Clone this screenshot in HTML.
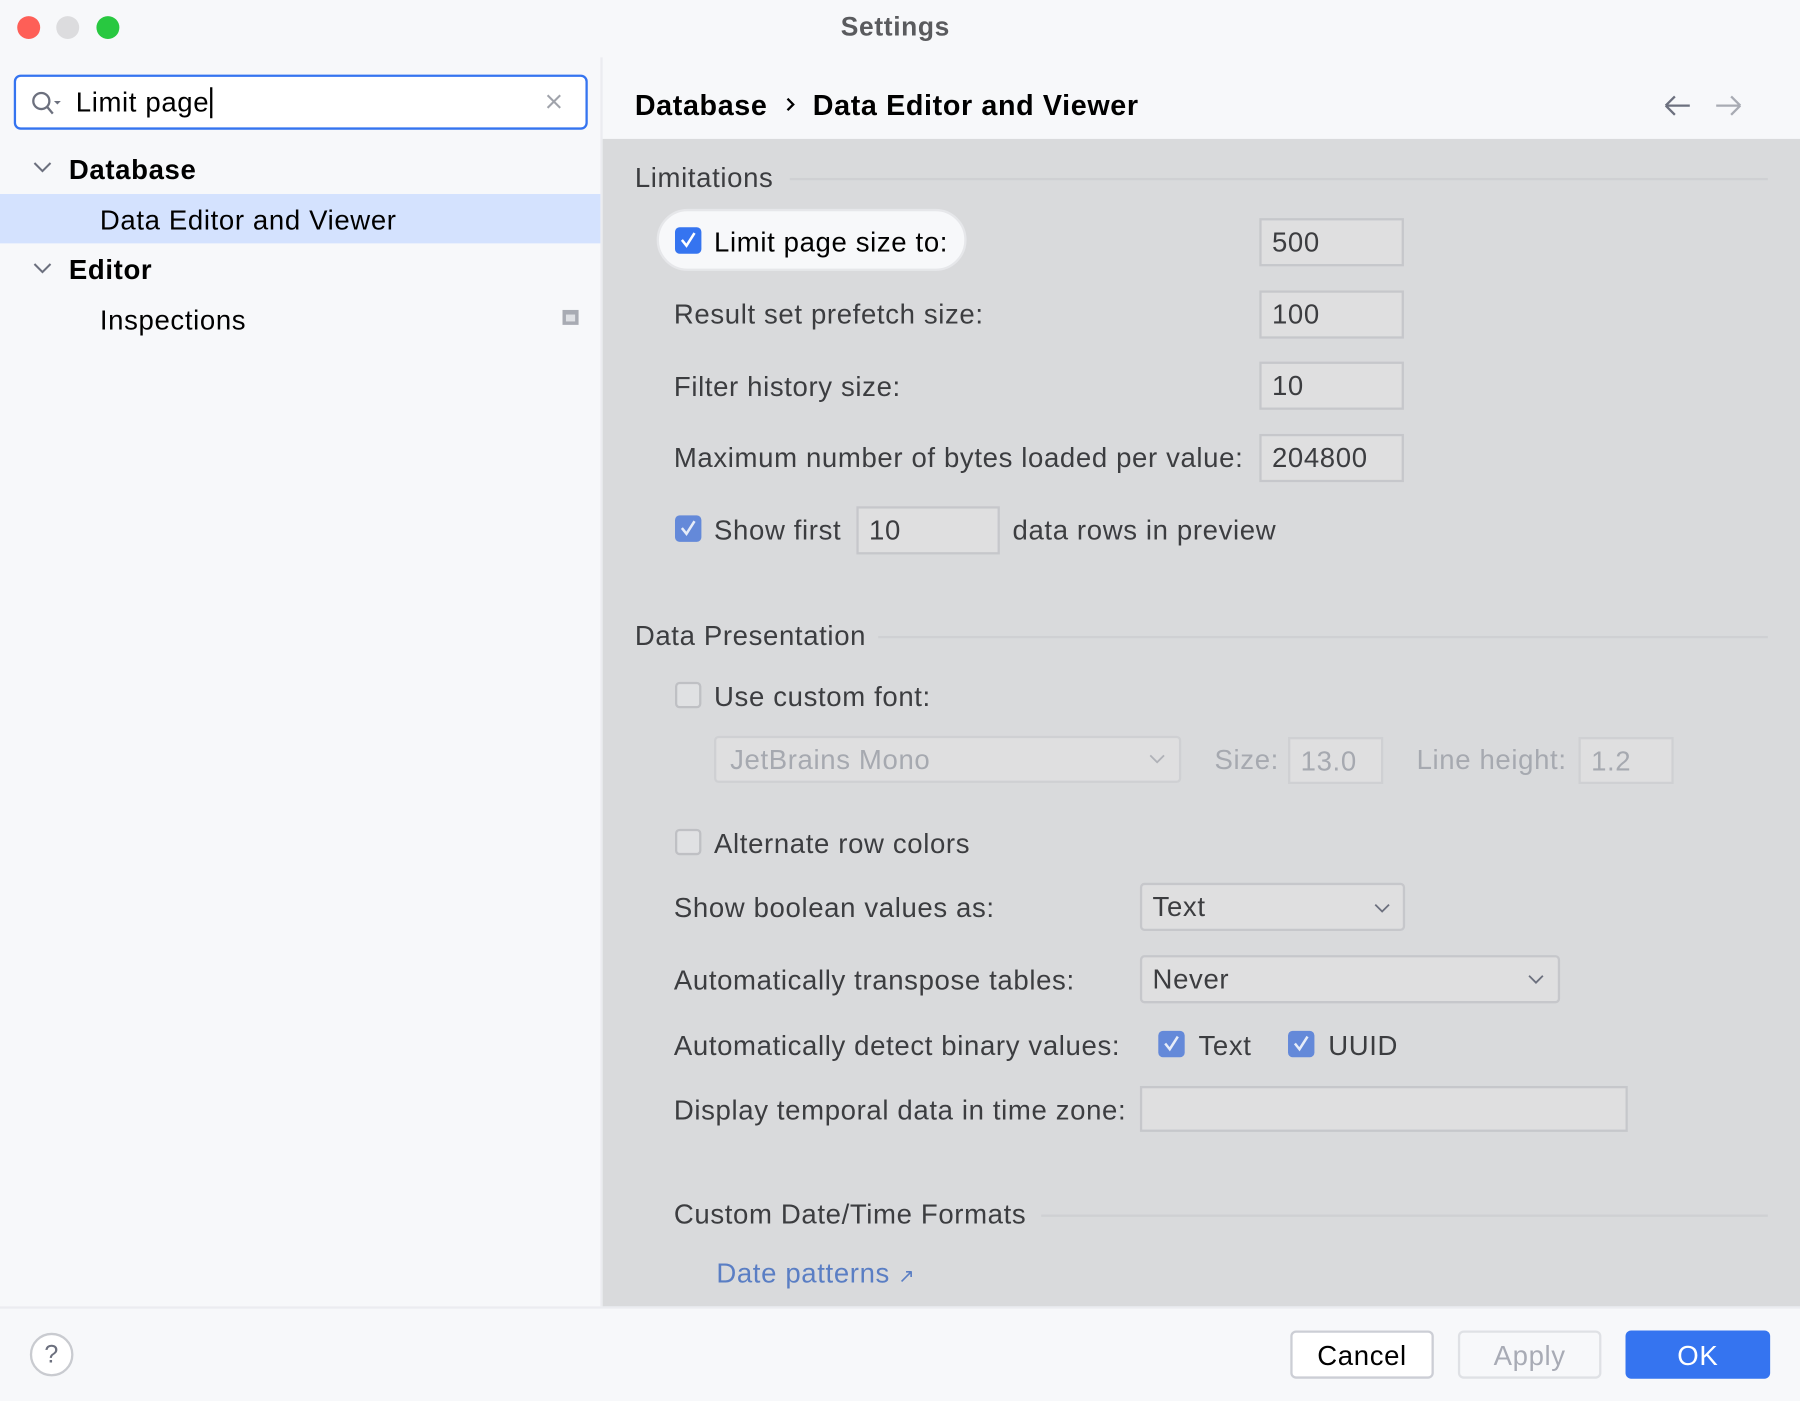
<!DOCTYPE html>
<html><head><meta charset="utf-8"><style>
html,body{margin:0;padding:0;width:1800px;height:1400px;overflow:hidden;background:#f7f8fa}
#s{position:absolute;left:0;top:0;width:1568px;height:1220px;transform:scale(1.147959);transform-origin:0 0;background:#f7f8fa;font-family:"Liberation Sans",sans-serif;font-size:24px;color:#000;letter-spacing:0.55px}
.a{position:absolute;white-space:nowrap}
.t{position:absolute;white-space:nowrap;line-height:30px;height:30px}
.c{color:#3c3d40}
.inp{position:absolute;background:#dfdfe0;border:2px solid #c6c7cb;box-sizing:border-box;line-height:40px;padding-left:9px;color:#3c3d40}
.dis,.inp.dis{color:#a6a9b0}
.cb{position:absolute;width:23px;height:23px;border-radius:4px;box-sizing:border-box}
.on{background:#3574f0}
.on2{background:#6489d9}
.off{border:2px solid #bfc0c4;background:#e0e1e3}
.cb svg{position:absolute;left:3px;top:3px}
.hr{position:absolute;height:2px;background:#cfd0d3}
</style></head><body><div id="s">
<div class="a" style="left:15px;top:14px;width:20px;height:20px;border-radius:50%;background:#fe5f57"></div>
<div class="a" style="left:49px;top:14px;width:20px;height:20px;border-radius:50%;background:#dcdcde"></div>
<div class="a" style="left:84px;top:14px;width:20px;height:20px;border-radius:50%;background:#28c840"></div>
<div class="t" style="left:-4px;width:1568px;text-align:center;top:8px;font-weight:bold;color:#5a5b5e;font-size:23px">Settings</div>
<div class="a" style="left:523px;top:50px;width:2px;height:1088px;background:#ebecf0"></div>
<div class="a" style="left:12px;top:65px;width:500px;height:48px;border:2.5px solid #3574f0;border-radius:6px;background:#fff;box-sizing:border-box"></div>
<svg class="a" style="left:26px;top:78px" width="30" height="24" viewBox="0 0 30 24"><circle cx="10" cy="10" r="7" fill="none" stroke="#6c707e" stroke-width="2"/><path d="M15 15l5 6" stroke="#6c707e" stroke-width="2"/><path d="M21 10h6l-3 3z" fill="#6c707e"/></svg>
<div class="t" style="left:66px;top:75px">Limit page<span style="border-left:2px solid #000;margin-left:1px"></span></div>
<svg class="a" style="left:475px;top:81px" width="15" height="15"><path d="M2 2l11 11M13 2L2 13" stroke="#a0a3ab" stroke-width="1.8"/></svg>
<svg class="a" style="left:28px;top:140px" width="18" height="12"><path d="M2 2l7 7 7-7" fill="none" stroke="#6c707e" stroke-width="1.8"/></svg>
<div class="t" style="left:60px;top:134px;font-weight:bold">Database</div>
<div class="a" style="left:0;top:169px;width:523px;height:43px;background:#d4e2fe"></div>
<div class="t" style="left:87px;top:178px">Data Editor and Viewer</div>
<svg class="a" style="left:28px;top:228px" width="18" height="12"><path d="M2 2l7 7 7-7" fill="none" stroke="#6c707e" stroke-width="1.8"/></svg>
<div class="t" style="left:60px;top:221px;font-weight:bold">Editor</div>
<div class="t" style="left:87px;top:265px">Inspections</div>
<div class="a" style="left:490px;top:270px;width:14px;height:13px;background:#a8abb3"></div>
<div class="a" style="left:493px;top:274px;width:8px;height:6px;background:#dfe1e5"></div>
<div class="t" style="left:553px;top:77px;font-weight:bold;font-size:25px">Database</div>
<svg class="a" style="left:684px;top:84px" width="10" height="14"><path d="M2 2l5 5-5 5" fill="none" stroke="#000" stroke-width="2"/></svg>
<div class="t" style="left:708px;top:77px;font-weight:bold;font-size:25px">Data Editor and Viewer</div>
<svg class="a" style="left:1448px;top:82px" width="26" height="20"><path d="M3 10h21M3 10l8-8M3 10l8 8" fill="none" stroke="#6c707e" stroke-width="2"/></svg>
<svg class="a" style="left:1493px;top:82px" width="26" height="20"><path d="M2 10h21M23 10l-8-8M23 10l-8 8" fill="none" stroke="#a8abb3" stroke-width="2"/></svg>
<div class="a" style="left:525px;top:121px;width:1043px;height:1017px;background:#d9dadc"></div>
<div class="t c" style="left:553px;top:141px">Limitations</div>
<div class="hr" style="left:688px;top:155px;width:852px"></div>
<div class="a" style="left:572px;top:182px;width:270px;height:54px;border-radius:27px;background:#f7f8fa;border:2px solid #e6e7ea;box-sizing:border-box"></div>
<div class="cb on" style="left:588px;top:198px"><svg width="17" height="17"><path d="M3 8l4 5 7-11" fill="none" stroke="#fff" stroke-width="2.2"/></svg></div>
<div class="t" style="left:622px;top:197px">Limit page size to:</div>
<div class="inp" style="left:1097px;top:190px;width:126px;height:42px">500</div>
<div class="t c" style="left:587px;top:260px">Result set prefetch size:</div>
<div class="inp" style="left:1097px;top:253px;width:126px;height:42px">100</div>
<div class="t c" style="left:587px;top:323px">Filter history size:</div>
<div class="inp" style="left:1097px;top:315px;width:126px;height:42px">10</div>
<div class="t c" style="left:587px;top:385px">Maximum number of bytes loaded per value:</div>
<div class="inp" style="left:1097px;top:378px;width:126px;height:42px">204800</div>
<div class="cb on2" style="left:588px;top:449px"><svg width="17" height="17"><path d="M3 8l4 5 7-11" fill="none" stroke="#e6ecf8" stroke-width="2.2"/></svg></div>
<div class="t c" style="left:622px;top:448px">Show first</div>
<div class="inp" style="left:746px;top:441px;width:125px;height:42px">10</div>
<div class="t c" style="left:882px;top:448px">data rows in preview</div>
<div class="t c" style="left:553px;top:540px">Data Presentation</div>
<div class="hr" style="left:765px;top:554px;width:775px"></div>
<div class="cb off" style="left:588px;top:594px"></div>
<div class="t c" style="left:622px;top:593px">Use custom font:</div>
<div class="inp dis" style="left:622px;top:641px;width:407px;height:41px;border-radius:4px;border-color:#cfd0d3;padding-left:12px">JetBrains Mono</div>
<svg class="a" style="left:1000px;top:656px" width="16" height="10"><path d="M2 2l6 6 6-6" fill="none" stroke="#b0b2b8" stroke-width="1.6"/></svg>
<div class="t dis" style="left:1058px;top:648px">Size:</div>
<div class="inp dis" style="left:1122px;top:642px;width:83px;height:41px;border-color:#cfd0d3">13.0</div>
<div class="t dis" style="left:1234px;top:648px">Line height:</div>
<div class="inp dis" style="left:1375px;top:642px;width:83px;height:41px;border-color:#cfd0d3">1.2</div>
<div class="cb off" style="left:588px;top:722px"></div>
<div class="t c" style="left:622px;top:721px">Alternate row colors</div>
<div class="t c" style="left:587px;top:777px">Show boolean values as:</div>
<div class="inp" style="left:993px;top:769px;width:231px;height:42px;border-radius:4px">Text</div>
<svg class="a" style="left:1196px;top:786px" width="16" height="10"><path d="M2 2l6 6 6-6" fill="none" stroke="#6c707e" stroke-width="1.6"/></svg>
<div class="t c" style="left:587px;top:840px">Automatically transpose tables:</div>
<div class="inp" style="left:993px;top:832px;width:366px;height:42px;border-radius:4px">Never</div>
<svg class="a" style="left:1330px;top:848px" width="16" height="10"><path d="M2 2l6 6 6-6" fill="none" stroke="#6c707e" stroke-width="1.6"/></svg>
<div class="t c" style="left:587px;top:897px">Automatically detect binary values:</div>
<div class="cb on2" style="left:1009px;top:898px"><svg width="17" height="17"><path d="M3 8l4 5 7-11" fill="none" stroke="#e6ecf8" stroke-width="2.2"/></svg></div>
<div class="t c" style="left:1044px;top:897px">Text</div>
<div class="cb on2" style="left:1122px;top:898px"><svg width="17" height="17"><path d="M3 8l4 5 7-11" fill="none" stroke="#e6ecf8" stroke-width="2.2"/></svg></div>
<div class="t c" style="left:1157px;top:897px">UUID</div>
<div class="t c" style="left:587px;top:953px">Display temporal data in time zone:</div>
<div class="inp" style="left:993px;top:946px;width:425px;height:40px"></div>
<div class="t c" style="left:587px;top:1044px">Custom Date/Time Formats</div>
<div class="hr" style="left:907px;top:1058px;width:633px"></div>
<div class="t" style="left:624px;top:1095px;color:#5a7ec4">Date patterns <span style="font-size:17px">↗</span></div>
<div class="a" style="left:0;top:1138px;width:1568px;height:2px;background:#ebecf0"></div>
<div class="a" style="left:26px;top:1161px;width:38px;height:38px;border-radius:50%;border:2px solid #c9cbd0;box-sizing:border-box;background:#fff;text-align:center;line-height:34px;font-size:22px;color:#6c707e">?</div>
<div class="a" style="left:1124px;top:1159px;width:125px;height:42px;border:2px solid #ccced5;border-radius:5px;background:#fff;box-sizing:border-box;text-align:center;line-height:42px">Cancel</div>
<div class="a" style="left:1270px;top:1159px;width:125px;height:42px;border:2px solid #dfe1e5;border-radius:5px;background:#f7f8fa;box-sizing:border-box;text-align:center;line-height:42px;color:#a8abb5">Apply</div>
<div class="a" style="left:1416px;top:1159px;width:126px;height:42px;border-radius:5px;background:#3574f0;text-align:center;line-height:46px;color:#fff">OK</div>
</div></body></html>
